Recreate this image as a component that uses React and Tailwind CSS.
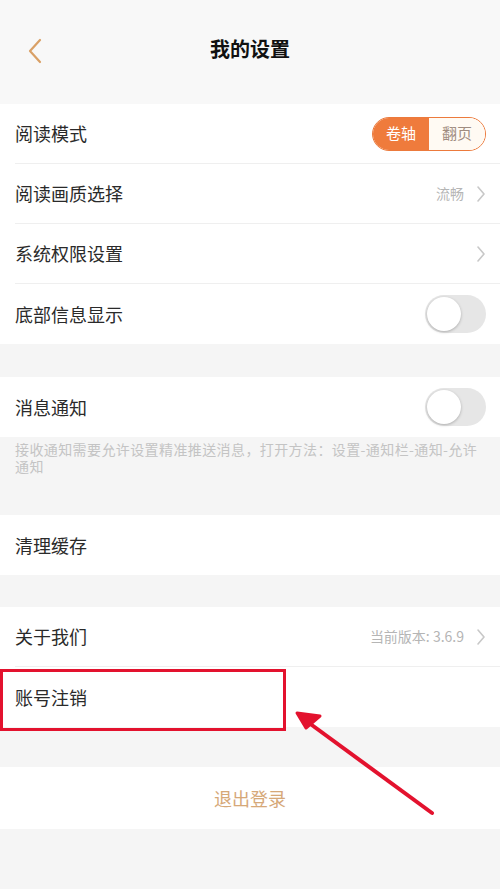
import React from "react";

const font = { fontFamily: '"Noto Sans CJK SC", "Noto Sans", sans-serif' };

function Chevron() {
  return (
    <svg width="10" height="18" viewBox="0 0 10 18" className="ml-[12px]">
      <path d="M2 2 L8 9 L2 16" fill="none" stroke="#c8c8c8" strokeWidth="1.6" strokeLinecap="round" strokeLinejoin="round" />
    </svg>
  );
}

function Toggle() {
  return (
    <div className="w-[61px] h-[38px] rounded-full bg-[#e6e6e6] p-[2px] flex items-center">
      <div className="w-[34px] h-[34px] rounded-full bg-white shadow-[0_1px_3px_rgba(0,0,0,0.25)]" />
    </div>
  );
}

function Row({ label, right, border = true, children }) {
  return (
    <div className="relative h-[60px] bg-white flex items-center pl-[15px]">
      <div className={`flex-1 h-full flex items-center pr-[14px] ${border ? "border-b border-[#efefef]" : ""}`}>
        <span className="flex-1 text-[18px] text-[#2a2a2a]">{label}</span>
        {right}
      </div>
      {children}
    </div>
  );
}

export default function App() {
  return (
    <div className="relative w-[500px] h-[889px] bg-[#f5f5f5] overflow-hidden" style={font}>
      {/* header */}
      <div className="h-[104px] bg-[#f8f8f8] flex items-center relative">
        <div className="absolute left-[26px] top-[37px]">
          <svg width="18" height="28" viewBox="0 0 18 28">
            <path d="M14 3 L4 14 L14 25" fill="none" stroke="#d9a066" strokeWidth="2.2" strokeLinecap="round" strokeLinejoin="round" />
          </svg>
        </div>
        <div className="w-full text-center text-[20px] font-bold text-[#111] mt-[-6px]">我的设置</div>
      </div>

      {/* section 1 */}
      <div className="bg-white">
        <Row
          label="阅读模式"
          right={
            <div className="flex h-[34px] w-[114px] rounded-full border border-[#ec7a3c] overflow-hidden">
              <div className="flex-1 bg-[#ef7b3c] text-white text-[15px] flex items-center justify-center">卷轴</div>
              <div className="flex-1 bg-[#fffaf3] text-[#a08c80] text-[15px] flex items-center justify-center">翻页</div>
            </div>
          }
        />
        <Row
          label="阅读画质选择"
          right={
            <div className="flex items-center">
              <span className="text-[14px] text-[#b5b5b5]">流畅</span>
              <Chevron />
            </div>
          }
        />
        <Row label="系统权限设置" right={<Chevron />} />
        <Row label="底部信息显示" right={<Toggle />} border={false} />
      </div>

      <div className="h-[33px]" />

      {/* section 2 */}
      <Row label="消息通知" right={<Toggle />} border={false} />
      <div className="px-[15px] pt-[4px] pb-[40px] text-[14px] leading-[17px] text-[#c4c4c4] tracking-[0.4px]">
        接收通知需要允许设置精准推送消息，打开方法：设置-通知栏-通知-允许通知
      </div>

      <Row label="清理缓存" border={false} />

      <div className="h-[32px]" />

      <Row
        label="关于我们"
        right={
          <div className="flex items-center">
            <span className="text-[14px] text-[#b5b5b5]">当前版本: 3.6.9</span>
            <Chevron />
          </div>
        }
      />
      <Row label="账号注销" border={false}>
        <div className="absolute left-0 top-[2px] w-[286px] h-[62px] border-[3px] border-[#e3122e]" />
      </Row>

      <div className="h-[40px]" />

      <div className="h-[62px] bg-white flex items-center justify-center text-[18px] text-[#d6a878]">退出登录</div>

      {/* arrow annotation */}
      <svg className="absolute left-0 top-0 pointer-events-none" width="500" height="889" viewBox="0 0 500 889">
        <line x1="432" y1="813" x2="305" y2="720" stroke="#e3122e" strokeWidth="4" strokeLinecap="round" />
        <path d="M297 713 L320 716 L306 728 Z" fill="#e3122e" stroke="#e3122e" strokeWidth="3" strokeLinejoin="round" />
      </svg>
    </div>
  );
}
